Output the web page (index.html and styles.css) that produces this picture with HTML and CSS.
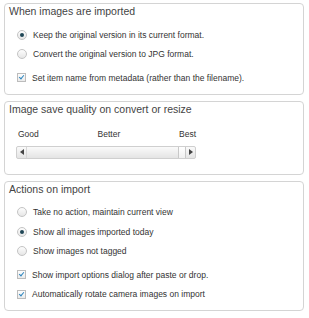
FILE: index.html
```html
<!DOCTYPE html>
<html lang="en">
<head>
  <meta charset="UTF-8" />
  <title>Import options</title>
  <link rel="stylesheet" href="styles.css">
</head>
<body>

<div class="panel">
  <div class="panel-title">When images are imported</div>
  <div class="options">
    <div class="row"><span class="radio checked"></span>Keep the original version in its current format.</div>
    <div class="row"><span class="radio"></span>Convert the original version to JPG format.</div>
    <div class="row group"><span class="check checked"></span>Set item name from metadata (rather than the filename).</div>
  </div>
</div>

<div class="panel">
  <div class="panel-title">Image save quality on convert or resize</div>
  <div class="quality">
    <div class="labels">
      <span>Good</span>
      <span>Better</span>
      <span>Best</span>
    </div>
    <div class="slider">
      <span class="arrow left"></span>
      <span class="track"></span>
      <span class="thumb"></span>
      <span class="arrow right"></span>
    </div>
  </div>
</div>

<div class="panel">
  <div class="panel-title">Actions on import</div>
  <div class="options">
    <div class="row"><span class="radio"></span>Take no action, maintain current view</div>
    <div class="row"><span class="radio checked"></span>Show all images imported today</div>
    <div class="row"><span class="radio"></span>Show images not tagged</div>
    <div class="row group"><span class="check checked"></span>Show import options dialog after paste or drop.</div>
    <div class="row"><span class="check checked"></span>Automatically rotate camera images on import</div>
  </div>
</div>

</body>
</html>
```

FILE: styles.css
```css
body {
  margin: 0;
  padding: 3px 5px 0 4px;
  font-family: "Liberation Sans", Arial, sans-serif;
  color: #333;
  background: #fff;
}

.panel {
  border: 1px solid #d4d4d4;
  border-radius: 4px;
  margin-bottom: 6px;
  padding-bottom: 6px;
}

.panel-title {
  font-size: 10.5px;
  line-height: 12px;
  color: #444;
  padding: 1px 4px 3px;
}

.options {
  padding-top: 5px;
  padding-left: 12px;
}

.row {
  display: flex;
  align-items: center;
  gap: 6px;
  height: 19.5px;
  font-size: 8.5px;
}

.row.group {
  margin-top: 4px;
}

.radio {
  width: 8px;
  height: 8px;
  border: 1px solid #c4c4c4;
  border-radius: 50%;
  background: linear-gradient(#fdfdfd, #e6e6e6);
  display: flex;
  align-items: center;
  justify-content: center;
}

.radio.checked::after {
  content: "";
  width: 4px;
  height: 4px;
  border-radius: 50%;
  background: #1f4656;
}

.check {
  width: 7px;
  height: 7px;
  border: 1px solid #bcbcbc;
  background: linear-gradient(#fdfdfd, #ebebeb);
  position: relative;
}

.check.checked::after {
  content: "";
  position: absolute;
  left: 2px;
  top: 0px;
  width: 2px;
  height: 4px;
  border: solid #2f86bf;
  border-width: 0 1.5px 1.5px 0;
  transform: rotate(40deg);
}

.quality {
  padding: 11px 0 9px 11px;
  width: 180px;
}

.labels {
  display: flex;
  justify-content: space-between;
  font-size: 8.5px;
  line-height: 10px;
  padding: 0 0 7px 2px;
}

.slider {
  display: flex;
  height: 11px;
  border: 1px solid #cfcfcf;
  border-radius: 2px;
  background: linear-gradient(#fafafa, #e4e4e4);
}

.track {
  flex: 1;
}

.arrow {
  width: 9px;
  display: flex;
  align-items: center;
  justify-content: center;
}

.arrow.left {
  border-right: 1px solid #d6d6d6;
}

.arrow.left::after,
.arrow.right::after {
  content: "";
  border-top: 3px solid transparent;
  border-bottom: 3px solid transparent;
}

.arrow.left::after {
  border-right: 4px solid #444;
}

.arrow.right::after {
  border-left: 4px solid #444;
}

.thumb {
  width: 6px;
  border-left: 1px solid #c8c8c8;
  border-right: 1px solid #c8c8c8;
  background: linear-gradient(#fff, #f0f0f0);
}
```
